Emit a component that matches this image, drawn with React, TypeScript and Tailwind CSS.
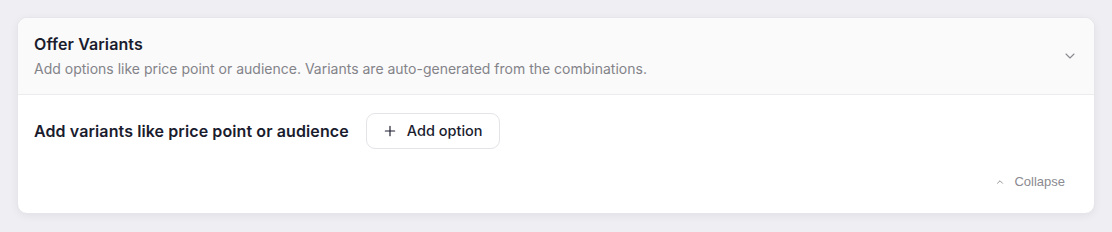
import React from 'react';

export default function App() {
  return (
    <div className="min-h-[232px] w-full bg-[#eeeef3] px-[17px] pt-[17px] font-['Inter',sans-serif]">
      <div className="overflow-hidden rounded-[10px] border border-[#e6e6ea] bg-white shadow-[0_2px_8px_rgba(20,20,40,0.06)]">
        {/* Header */}
        <div className="flex items-center justify-between border-b border-[#ececef] bg-[#fafafa] pl-4 pr-4 pt-[14px] pb-[15px]">
          <div>
            <h2 className="text-[16px] font-semibold leading-[24px] tracking-[0.1px] text-[#1a1c2e]">Offer Variants</h2>
            <p className="mt-[3px] text-[14px] leading-[20px] text-[#838389]">
              Add options like price point or audience. Variants are auto-generated from the combinations.
            </p>
          </div>
          <svg className="h-4 w-4 text-[#8a8a90]" fill="none" stroke="currentColor" viewBox="0 0 24 24">
            <path strokeLinecap="round" strokeLinejoin="round" strokeWidth={1.6} d="M6 9l6 6 6-6" />
          </svg>
        </div>

        {/* Body */}
        <div className="px-4 pt-[18px] pb-[21px]">
          <div className="flex items-center gap-[17px]">
            <span className="text-[16px] font-semibold tracking-[0.1px] text-[#1a1c2e]">Add variants like price point or audience</span>
            <button className="flex h-[36px] items-center gap-[10px] rounded-[9px] border border-[#e4e4e8] bg-white px-[16px] text-[14.5px] font-medium text-[#1a1c2e]">
              <svg className="h-[14px] w-[14px]" fill="none" stroke="currentColor" viewBox="0 0 24 24">
                <path strokeLinecap="round" strokeWidth={2} d="M12 4v16M4 12h16" />
              </svg>
              Add option
            </button>
          </div>
          <div className="mt-[23px] flex justify-end pr-[13px]">
            <button className="flex items-center gap-[9px] text-[13px] text-[#8a8a90] font-['Liberation_Sans',sans-serif]">
              <svg className="h-[10px] w-[10px]" fill="none" stroke="currentColor" viewBox="0 0 24 24">
                <path strokeLinecap="round" strokeLinejoin="round" strokeWidth={2.2} d="M6 15l6-6 6 6" />
              </svg>
              Collapse
            </button>
          </div>
        </div>
      </div>
    </div>
  );
}
